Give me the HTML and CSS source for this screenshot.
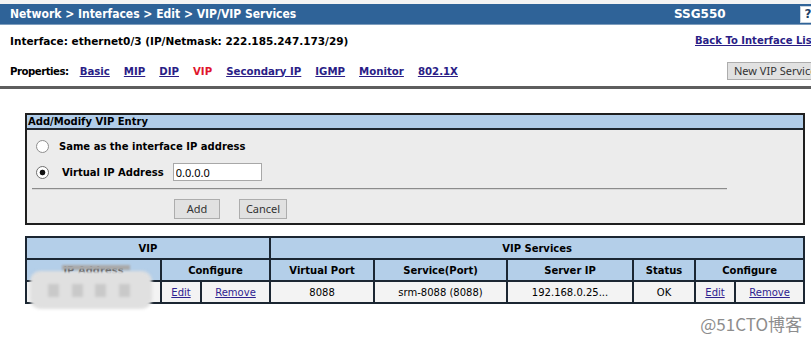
FILE: index.html
```html
<!DOCTYPE html>
<html>
<head>
<meta charset="utf-8">
<link rel="stylesheet" href="styles.css">
</head>
<body>
<div class="header">
  <div class="titlebar">
    <span class="crumb">Network &gt; Interfaces &gt; Edit &gt; VIP/VIP Services</span>
    <span class="model">SSG550</span>
    <span class="help">?</span>
  </div>
  <div class="inforow">
    <span class="iface">Interface: ethernet0/3 (IP/Netmask: 222.185.247.173/29)</span>
    <a class="back" href="#">Back To Interface List</a>
  </div>
  <div class="proprow">
    <div class="props">
      <span class="plabel">Properties:</span>
      <a href="#">Basic</a>
      <a href="#">MIP</a>
      <a href="#">DIP</a>
      <span class="current">VIP</span>
      <a href="#">Secondary IP</a>
      <a href="#">IGMP</a>
      <a href="#">Monitor</a>
      <a href="#">802.1X</a>
    </div>
    <button class="btn newbtn">New VIP Service</button>
  </div>
  <div class="rule"></div>
</div>

<div class="panel">
  <div class="panel-title">Add/Modify VIP Entry</div>
  <div class="panel-body">
    <div class="row">
      <input type="radio" name="vip" class="radio">
      <span class="lbl1">Same as the interface IP address</span>
    </div>
    <div class="row">
      <input type="radio" name="vip" class="radio" checked>
      <span class="lbl2">Virtual IP Address</span>
      <input type="text" class="ipin" value="0.0.0.0">
    </div>
    <div class="sep"></div>
    <div class="btnrow">
      <button class="btn addbtn">Add</button>
      <button class="btn cancelbtn">Cancel</button>
    </div>
  </div>
</div>

<div class="tablewrap">
  <table class="grid">
    <colgroup>
      <col style="width:135px">
      <col style="width:40px">
      <col style="width:69px">
      <col style="width:104px">
      <col style="width:133px">
      <col style="width:126px">
      <col style="width:62px">
      <col style="width:40px">
      <col style="width:69px">
    </colgroup>
    <tr class="hd">
      <th colspan="3">VIP</th>
      <th colspan="6">VIP Services</th>
    </tr>
    <tr class="hd">
      <th>IP Address</th>
      <th colspan="2">Configure</th>
      <th>Virtual Port</th>
      <th>Service(Port)</th>
      <th>Server IP</th>
      <th>Status</th>
      <th colspan="2">Configure</th>
    </tr>
    <tr class="data">
      <td></td>
      <td><a href="#">Edit</a></td>
      <td><a href="#">Remove</a></td>
      <td>8088</td>
      <td>srm-8088 (8088)</td>
      <td>192.168.0.25...</td>
      <td>OK</td>
      <td><a href="#">Edit</a></td>
      <td><a href="#">Remove</a></td>
    </tr>
  </table>
  <div class="blur">
    <span class="b1"></span><span class="b2"></span><span class="b3"></span><span class="b4"></span>
  </div>
  <div class="blurbar"></div>
</div>

<div class="watermark">@51CTO博客</div>
</body>
</html>
```

FILE: styles.css
```css
html, body {
  margin: 0;
  padding: 0;
  overflow: hidden;
  background: #ffffff;
}
body {
  font-family: "DejaVu Sans", Verdana, sans-serif;
  font-size: 10px;
  color: #000;
  width: 811px;
  height: 337px;
}
.header {
  width: 830px;
  border-top: 4px solid #f3f3f3;
}
.titlebar {
  height: 20px;
  background: #2f6398;
  border-bottom: 1px solid #7e9dbd;
  display: grid;
  grid-template-columns: 664px 126px 1fr;
  align-items: center;
  padding-left: 10px;
  color: #fff;
  font-weight: bold;
}
.crumb {
  font-family: "DejaVu Sans Condensed", "DejaVu Sans", sans-serif;
  font-size: 12px;
  white-space: nowrap;
}
.model {
  font-size: 12px;
}
.help {
  width: 14px;
  height: 15px;
  background: #fff;
  color: #1d3f66;
  border: 1px solid #c8d4e0;
  font-size: 12px;
  line-height: 15px;
  text-align: center;
}
.inforow {
  height: 31px;
  display: grid;
  grid-template-columns: 685px auto;
  align-items: center;
  padding-left: 10px;
  font-weight: bold;
  white-space: nowrap;
}
.iface {
  font-size: 10.5px;
}
.back {
  color: #2a1d86;
  text-decoration: underline;
}
.proprow {
  height: 30px;
  display: grid;
  grid-template-columns: 717px auto;
  align-items: center;
  padding-left: 10px;
  white-space: nowrap;
}
.props {
  display: flex;
  gap: 14px;
  font-weight: bold;
  font-size: 10.2px;
}
.props a {
  color: #2a1d86;
  text-decoration: underline;
}
.plabel {
  letter-spacing: -0.5px;
  margin-right: -3px;
}
.current {
  color: #e0142c;
}
.btn {
  font-family: "Noto Sans", "Open Sans", sans-serif;
  font-size: 11px;
  color: #333;
  background: #e1e1e1;
  border: 1px solid #adadad;
  border-radius: 0;
  padding: 0;
  height: 19px;
  line-height: 16px;
}
.newbtn {
  width: 92px;
  text-align: left;
  padding-left: 6px;
  height: 18px;
}
.rule {
  height: 3px;
  background: #5e5e5e;
}
.panel {
  margin: 24px 0 0 25px;
  width: 780px;
  box-sizing: border-box;
  border: 2px solid #1f1f1f;
  background: #ececec;
}
.panel-title {
  height: 13px;
  line-height: 13px;
  background: #b1cde9;
  border-bottom: 2px solid #1f2730;
  font-weight: bold;
  padding-left: 1px;
}
.panel-body {
  padding: 6px 0 4px 9px;
}
.row {
  height: 20px;
  display: flex;
  align-items: center;
  margin-bottom: 6px;
  font-weight: bold;
}
.radio {
  -webkit-appearance: none;
  appearance: none;
  width: 13px;
  height: 13px;
  margin: 0;
  border: 1px solid #8e8e8e;
  border-radius: 50%;
  background: #fff;
  box-sizing: border-box;
}
.radio:checked {
  background: radial-gradient(circle, #111 0, #111 2.5px, #fff 3.2px);
  border-color: #6f6f6f;
}
.lbl1 {
  margin-left: 10px;
}
.lbl2 {
  margin-left: 13px;
}
.ipin {
  margin-left: 9px;
  width: 89px;
  height: 18px;
  box-sizing: border-box;
  border: 1px solid #a8a8a8;
  background: #fff;
  font-family: "Noto Sans", "Open Sans", sans-serif;
  font-size: 11px;
  padding: 0 2px;
}
.sep {
  margin: 1px 0 0 -4px;
  width: 695px;
  border-top: 1px solid #8c8c8c;
  border-bottom: 1px solid #d8d8d8;
}
.btnrow {
  margin-top: 9px;
  padding-left: 138px;
  display: flex;
  gap: 19px;
}
.addbtn {
  width: 46px;
  height: 20px;
}
.cancelbtn {
  width: 48px;
  height: 20px;
}
.tablewrap {
  position: relative;
  margin: 11px 0 0 25px;
  width: 780px;
}
.grid {
  width: 780px;
  border-collapse: collapse;
  table-layout: fixed;
  border: 2px solid #1b2632;
}
.grid th, .grid td {
  border: 2px solid #1b2632;
  height: 20px;
  padding: 0;
  text-align: center;
  white-space: nowrap;
  overflow: hidden;
}
.grid th {
  background: #b4cfe9;
  font-weight: bold;
}
.grid td {
  background: #f3f3f3;
}
.grid td a {
  color: #2e2290;
  text-decoration: underline;
}
.blur {
  position: absolute;
  left: 5px;
  top: 35px;
  width: 122px;
  height: 38px;
  background: #e0e0e0;
  border-radius: 10px;
  filter: blur(1.5px);
  display: flex;
  align-items: center;
  justify-content: space-between;
  padding: 0 22px 0 18px;
  box-sizing: border-box;
}
.blur span {
  width: 11px;
  height: 13px;
  background: #c9c9c9;
}
.blurbar {
  position: absolute;
  left: 37px;
  top: 29px;
  width: 68px;
  height: 5px;
  background: #a9a9a9;
  filter: blur(1px);
}
.watermark {
  margin-top: 7px;
  width: 802px;
  text-align: right;
  font-family: "Noto Sans CJK SC", "Noto Sans", sans-serif;
  font-size: 17px;
  color: #8d8d8d;
  text-shadow: 0 0 1px #fff;
}
```
